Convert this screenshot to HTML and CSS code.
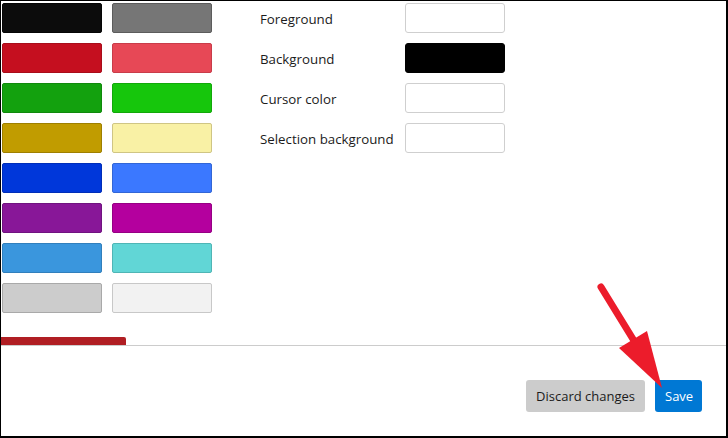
FILE: index.html
```html
<!DOCTYPE html>
<html>
<head>
<meta charset="utf-8">
<link rel="stylesheet" href="styles.css">
</head>
<body>
<div class="frame">
  <div class="main">
    <div class="swatches">
      <div class="sw" style="background:#0c0c0c;border-color:#050505"></div>
      <div class="sw" style="background:#767676;border-color:#5c5c5c"></div>
      <div class="sw" style="background:#c50f1f;border-color:#a80d1a"></div>
      <div class="sw" style="background:#e74856;border-color:#c83c49"></div>
      <div class="sw" style="background:#13a10e;border-color:#10890c"></div>
      <div class="sw" style="background:#16c60c;border-color:#12a80a"></div>
      <div class="sw" style="background:#c19c00;border-color:#9e7f00"></div>
      <div class="sw" style="background:#f9f1a5;border-color:#cfc584"></div>
      <div class="sw" style="background:#0037da;border-color:#002eb8"></div>
      <div class="sw" style="background:#3b78ff;border-color:#3266d6"></div>
      <div class="sw" style="background:#881798;border-color:#701380"></div>
      <div class="sw" style="background:#b4009e;border-color:#960083"></div>
      <div class="sw" style="background:#3a96dd;border-color:#317fbc"></div>
      <div class="sw" style="background:#61d6d6;border-color:#4fb5b5"></div>
      <div class="sw" style="background:#cccccc;border-color:#a9a9a9"></div>
      <div class="sw" style="background:#f2f2f2;border-color:#c8c8c8"></div>
    </div>
    <div class="form">
      <div class="label">Foreground</div><div class="box"></div>
      <div class="label">Background</div><div class="box dark"></div>
      <div class="label">Cursor color</div><div class="box"></div>
      <div class="label">Selection background</div><div class="box"></div>
    </div>
  </div>
  <div class="tabbar"><div class="tab"></div></div>
  <div class="footer">
    <button class="btn discard">Discard changes</button>
    <button class="btn save">Save</button>
  </div>
  <svg class="arrow" width="728" height="438" viewBox="0 0 728 438">
    <line x1="601" y1="287" x2="636" y2="344" stroke="#ec1c2b" stroke-width="7" stroke-linecap="round"/>
    <polygon points="619,348 647,331 662,388" fill="#ec1c2b"/>
  </svg>
</div>
</body>
</html>
```
FILE: styles.css
```css
* { box-sizing: border-box; }
html, body { margin: 0; padding: 0; background: #fff; }
.frame {
  position: relative;
  width: 728px;
  height: 438px;
  border-top: 1px solid #000;
  border-left: 1px solid #000;
  border-right: 2px solid #000;
  border-bottom: 2px solid #000;
  font-family: "Open Sans", "Noto Sans", sans-serif;
  font-size: 13px;
  color: #1b1b1b;
  display: flex;
  flex-direction: column;
  overflow: hidden;
}
.main {
  display: flex;
  padding: 2px 0 0 1px;
  height: 336px;
}
.swatches {
  display: grid;
  grid-template-columns: 100px 100px;
  grid-auto-rows: 30px;
  column-gap: 10px;
  row-gap: 10px;
  align-content: start;
}
.sw {
  border: 1px solid;
  border-radius: 2px;
}
.form {
  margin-left: 48px;
  display: grid;
  grid-template-columns: 145px 100px;
  grid-auto-rows: 30px;
  row-gap: 10px;
  align-content: start;
  align-items: center;
}
.label {
  font-size: 13.3px;
  line-height: 30px;
  padding-top: 1px;
}
.box {
  height: 30px;
  border: 1px solid #cfcfcf;
  border-radius: 3px;
  background: #fff;
}
.box.dark { background: #000; border-color: #000; }
.tabbar {
  height: 9px;
  border-bottom: 1px solid #cccccc;
  display: flex;
}
.tab {
  width: 125px;
  height: 8px;
  background: #b01e23;
  border-radius: 0 2px 0 0;
}
.footer {
  flex: 1;
  display: flex;
  justify-content: flex-end;
  align-items: flex-start;
  padding: 34px 24px 0 0;
  gap: 10px;
}
.btn {
  font-family: inherit;
  font-size: 13px;
  height: 32px;
  border: none;
  border-radius: 3px;
  padding: 0 10px;
  cursor: pointer;
}
.discard { background: #cccccc; color: #1b1b1b; width: 119px; }
.save { background: #0078d4; color: #fff; width: 47px; }
.arrow {
  position: absolute;
  left: -1px;
  top: -1px;
  pointer-events: none;
}
```
